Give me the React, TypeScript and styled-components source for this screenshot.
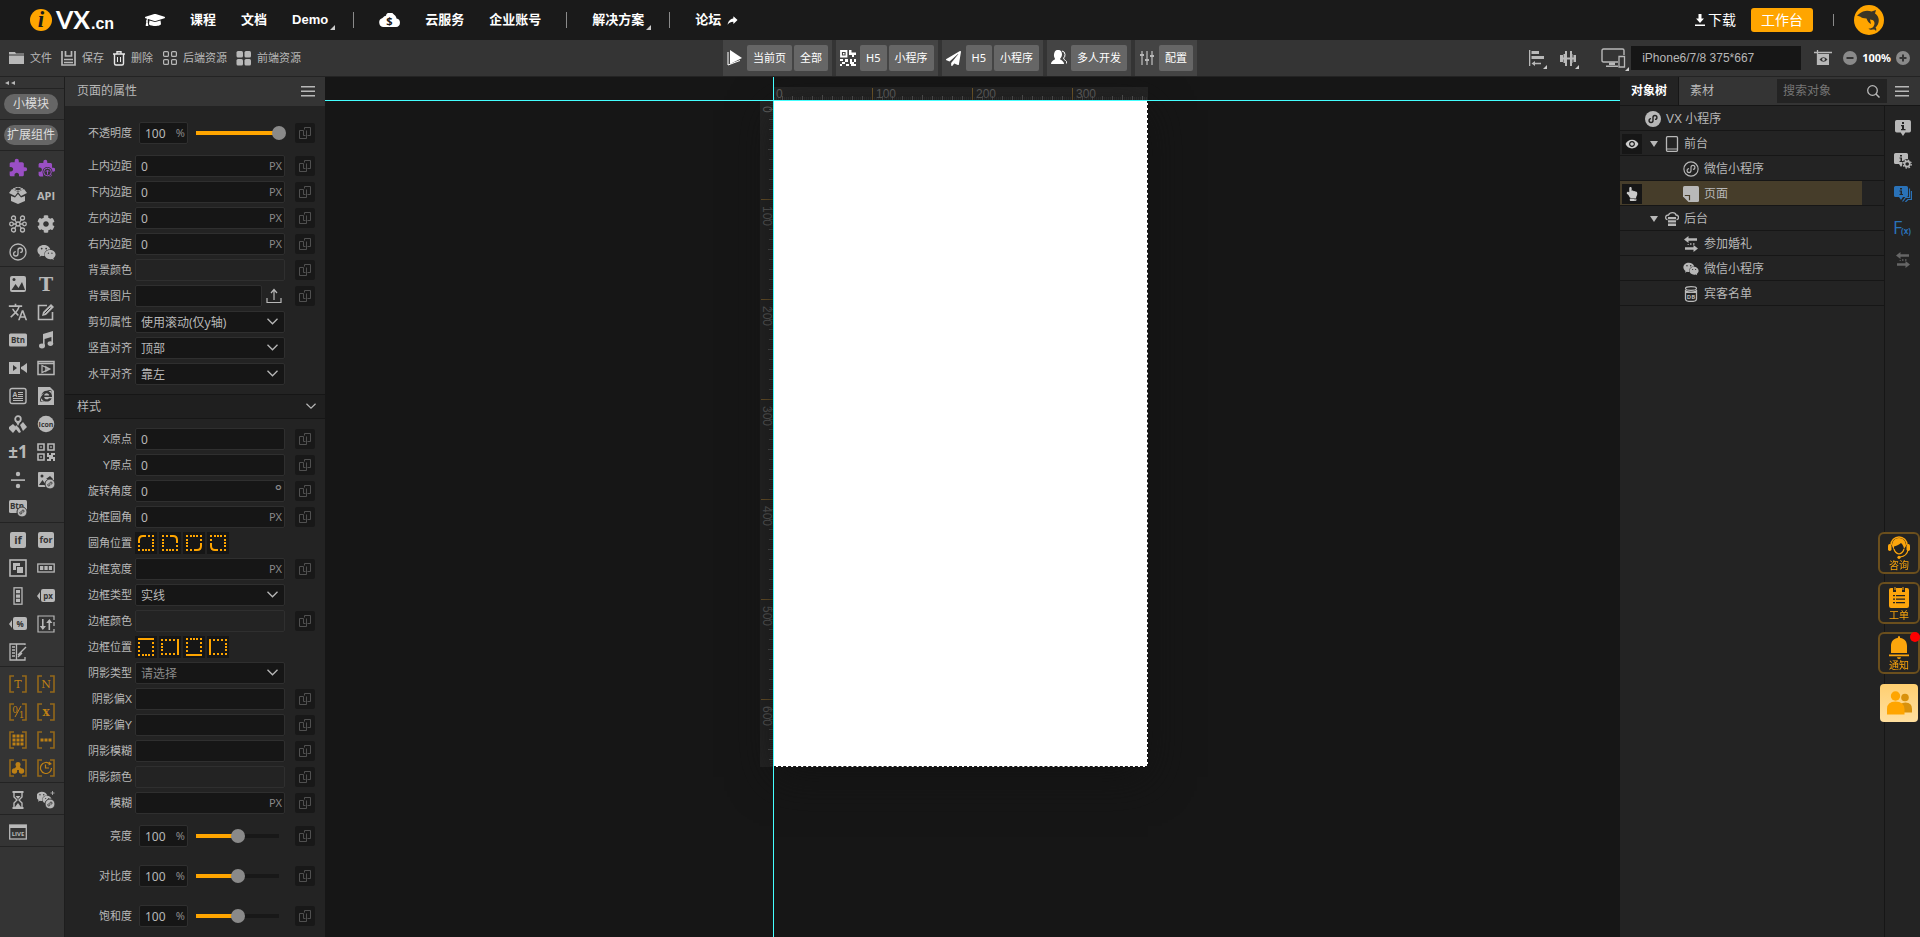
import React, { ReactNode, useId, useState } from 'react';
import styled, { createGlobalStyle } from 'styled-components';
import { FaCog, FaGraduationCap, FaHandPointUp, FaInternetExplorer, FaPaperPlane, FaWeixin } from 'react-icons/fa';
import { MdExtension, MdTranslate, MdVisibility } from 'react-icons/md';
import { IoIosShareAlt } from 'react-icons/io';

const sans = `'Liberation Sans', 'Noto Sans CJK SC', sans-serif`;
const ui = `'Noto Sans', 'Noto Sans CJK SC', sans-serif`;
const accent = '#ffa500';

const GlobalStyle = createGlobalStyle`
  *, *::before, *::after { box-sizing: border-box; }
  body { margin: 0; background: #161616; color: #b8b8b8; font: 12px/16px ${sans}; }
  button, input, select { font: inherit; color: inherit; border: 0; padding: 0; margin: 0; background: none; outline: none; }
  button { cursor: pointer; }
  a { color: inherit; text-decoration: none; }
  ul { list-style: none; margin: 0; padding: 0; }
  svg { display: block; flex: none; }
`;

/* ---------- icons ---------- */

const Svg = ({ w = 18, h, box, children }: { w?: number; h?: number; box?: string; children: ReactNode }) => (
  <svg width={w} height={h ?? w} viewBox={box ?? `0 0 ${w} ${h ?? w}`} fill="currentColor" aria-hidden="true">
    {children}
  </svg>
);

const Word = ({ x = 9, y, size, fill = 'currentColor', serif, weight = 700, children }: {
  x?: number; y: number; size: number; fill?: string; serif?: boolean; weight?: number; children: ReactNode;
}) => (
  <text x={x} y={y} fontSize={size} fontWeight={weight} fill={fill} textAnchor="middle"
    fontFamily={serif ? 'DejaVu Serif, serif' : 'Open Sans, sans-serif'}>{children}</text>
);

const stroke = { fill: 'none', stroke: 'currentColor' } as const;
const hook = 'M6.8 8.6a2.2 2.2 0 1 0 2.2 2.2V7.2a2.2 2.2 0 1 1 2.2 2.2';

const MiniLine = ({ w = 18 }: { w?: number }) => (
  <Svg w={w} box="0 0 18 18">
    <circle cx="9" cy="9" r="8" {...stroke} strokeWidth="1.3" />
    <path d={hook} {...stroke} strokeWidth="1.3" />
  </Svg>
);
const MiniSolid = () => (
  <Svg w={16} box="0 0 18 18">
    <circle cx="9" cy="9" r="9" />
    <path d={hook} fill="none" stroke="#232323" strokeWidth="1.6" />
  </Svg>
);
const LinkBadge = () => (
  <g>
    <circle cx="13" cy="13" r="5" stroke="#343434" />
    <path d="M11.7 12.8a1.1 1.1 0 1 0 1.2 1.2v-2a1.1 1.1 0 1 1 1.2 1.2" fill="none" stroke="#343434" strokeWidth="0.9" />
  </g>
);
const Brackets = ({ children }: { children: ReactNode }) => (
  <Svg>
    <path d="M5 1H1v16h4M13 1h4v16h-4" fill="none" stroke="#94681a" strokeWidth="1.6" />
    <g fill="#bd8015" color="#bd8015">{children}</g>
  </Svg>
);
const QrIcon = () => (
  <Svg>
    <path d="M1 1h6v6H1zM11 1h6v6h-6zM1 11h6v6H1z" {...stroke} strokeWidth="1.6" />
    <path d="M3.2 3.2h1.6v1.6H3.2zM13.2 3.2h1.6v1.6h-1.6zM3.2 13.2h1.6v1.6H3.2zM10 10h2v2h2v-2h4v2h-2v2h2v4h-2v-2h-2v2h-4v-2h2v-2h-2z" />
  </Svg>
);
const Swap = ({ w = 16 }: { w?: number }) => (
  <Svg w={w} box="0 0 16 16">
    <path d="M1 3.5 5.5 0v2.3H14v2.4H5.5V7zM15 12.5 10.5 9v2.3H2v2.4h8.5V16z" />
    <path d="M7 7h1.5v2H7zM10 7h1.5v2H10zM4.5 8H6v1H4.5z" opacity=".7" />
  </Svg>
);
const Menu = () => <Svg w={14} h={11}><path d="M0 0h14v1.5H0zM0 4.5h14V6H0zM0 9h14v1.5H0z" /></Svg>;
const Chevron = ({ w = 11 }: { w?: number }) => (
  <Svg w={w} h={w * 7 / 11} box="0 0 11 7"><path d="m.5.8 5 5 5-5" {...stroke} strokeWidth="1.3" /></Svg>
);
const CopyIcon = () => (
  <Svg w={12}>
    <path d="M4.5 3.5h-4v8h7v-8M4.5 3.5v5h2M8.5 8.5h3v-8h-6v2" {...stroke} />
  </Svg>
);
const TagIcon = ({ children }: { children: ReactNode }) => (
  <Svg>
    <rect x="4" y="2" width="14" height="13" rx="2" />
    <path d="M3 5v8L0 9z" />
    <Word x={11} y={12} size={8} fill="#343434">{children}</Word>
  </Svg>
);
const InfoBubble = ({ gear, stack }: { gear?: boolean; stack?: boolean }) => (
  <Svg w={gear || stack ? 18 : 16} h={16}>
    <path d="M1.5 0h11Q14 0 14 1.5v8q0 1.5-1.5 1.5H9l-2 3-2-3H1.5Q0 11 0 9.5v-8Q0 0 1.5 0z"
      transform={gear || stack ? undefined : 'scale(1.14 1.14)'} />
    <path d={gear || stack ? 'M6 2h2v1.5H6zM5.5 4.5H8V8h1v1H5.5V8h1V5.5h-1z' : 'M7 2h2v2H7zM6 5h3v4h1.5v1.2H6V9h1V6.2H6z'} fill="#232323" />
    {stack && <path d="M15.5 2.5v9h-4l-3 4M17.4 5v8.5h-3.5L11.400 16" {...stroke} strokeWidth="1.2" />}
    {gear && <g><circle cx="13.2" cy="11" r="5" fill="#232323" /><circle cx="13.2" cy="11" r="2.6" {...stroke} strokeWidth="1.6" /><circle cx="13.2" cy="11" r="4" {...stroke} strokeWidth="1.3" strokeDasharray="1.7 1.44" /></g>}
  </Svg>
);
const Fx = () => (
  <Svg w={22} h={20}>
    <text x="1" y="16" fontSize="18" fontFamily="Open Sans, sans-serif">F</text>
    <text x="9" y="16" fontSize="8" fontWeight="700" fontFamily="Open Sans, sans-serif">(x)</text>
  </Svg>
);

type Tool = { name: string; icon: ReactNode };
const T = (name: string, icon: ReactNode): Tool => ({ name, icon });

const toolSections: Tool[][] = [
  [
    T('小模块', <MdExtension size={20} color="#9a4fc4" />),
    T('上传模块', <Svg><g color="#9a4fc4"><MdExtension size={19} /></g><circle cx="10.5" cy="13" r="5" fill="#343434" /><circle cx="10.5" cy="13" r="3.8" fill="none" stroke="#9a4fc4" /><path d="M10.5 15.5v-4M8.800 12.800l1.700-1.800 1.700 1.800" fill="none" stroke="#9a4fc4" /></Svg>),
    T('容器', <Svg><path d="m0 6 3-4 6 3-3 4zM18 6l-3-4-6 3 3 4zM2 9l4 1.5L9 7l3 3.5L16 9v5l-7 3-7-3z" /><path d="m4 2 5-2 5 2-5 2z" {...stroke} /></Svg>),
    T('API', <Svg w={20} h={18}><Word x={10} y={13} size={11}>API</Word></Svg>),
    T('网络', <Svg><g {...stroke} strokeWidth="1.3"><circle cx="4.5" cy="3" r="2" /><circle cx="13.5" cy="3" r="2" /><circle cx="2.5" cy="9" r="1.8" /><circle cx="15.5" cy="9" r="1.8" /><circle cx="4.5" cy="15" r="2" /><circle cx="13.5" cy="15" r="2" /><circle cx="9" cy="9" r="2" /><path d="m7.5 7.5-2-3M10.5 7.5l2-3M4 9h3M11 9h3M7.5 10.5l-2 3M10.5 10.5l2 3" /></g></Svg>),
    T('设置', <FaCog size={18} />),
    T('小程序', <MiniLine />),
    T('微信', <FaWeixin size={19} />),
  ],
  [
    T('图片', <Svg><rect x="1" y="1" width="16" height="16" rx="2" /><path d="m2.5 15 4-6 3 4L13 7l3 8z" fill="#343434" /><circle cx="5" cy="4.5" r="1.5" fill="#343434" /></Svg>),
    T('文字', <Svg w={20} h={24}><Word x={10} y={19} size={19} serif>T</Word></Svg>),
    T('翻译', <MdTranslate size={20} />),
    T('编辑', <Svg><path d="M10 2.5H1.5v14h14V9" {...stroke} strokeWidth="1.6" /><path d="m5 13 1-4 8-8 3 3-8 8z" /><path d="m7.5 10.5 6-6" stroke="#343434" /></Svg>),
    T('按钮', <Svg><rect y="2.5" width="18" height="13" rx="1.5" /><Word y={12} size={8} fill="#343434">Btn</Word></Svg>),
    T('音乐', <Svg><path d="m6 3 10-3v13h-1.6V6L7.600 8v7H6z" /><ellipse cx="5" cy="15" rx="3" ry="2.4" /><ellipse cx="13.4" cy="12.6" rx="2.8" ry="2.3" /></Svg>),
    T('视频', <Svg><path d="M0 3h11v12H0zM12 8l2-1 4-3v10l-4-3-2-1z" /><path d="m4 6 4 3-4 3z" fill="#343434" /></Svg>),
    T('播放器', <Svg><path d="M1 2.5h16v13H1zM1 4.5h16" {...stroke} strokeWidth="1.5" /><path d="m5 6.5 7.5 3.5L5 13.5z" {...stroke} strokeWidth="1.2" /><path d="m8 6.5 6 3.5-6 3.5z" opacity=".7" /></Svg>),
    T('文章', <Svg><rect x="1" y="1.5" width="16" height="15" rx="2" {...stroke} strokeWidth="1.4" /><Word x={6} y={10} size={7}>A</Word><path d="M9 5.5h5M9 7.5h5M9 9.5h5M4 11.5h10M4 13.5h10" {...stroke} /></Svg>),
    T('网页', <Svg><path d="M1 0h12l4 4v14H1z" /><g color="#343434" transform="translate(3 3)"><FaInternetExplorer size={12} /></g></Svg>),
    T('地图', <Svg><circle cx="9" cy="4" r="2.8" {...stroke} strokeWidth="1.8" /><path d="M6.5 6 9 11l2.5-5zM0 12l4-3 4 4-4 5-4-4zM7 10l3 3 2 4-2 1-4-5zM11 10l3-3 4 5-4 4z" /></Svg>),
    T('图标', <Svg><circle cx="9" cy="9" r="8.3" /><Word y={12} size={7} fill="#343434">Icon</Word></Svg>),
    T('计数', <Svg w={26} h={26}><Word x={13} y={19} size={17}>±1</Word></Svg>),
    T('二维码', <QrIcon />),
    T('除法', <Svg><path d="M2 8.3h14v1.6H2z" /><circle cx="9" cy="3" r="2.2" /><circle cx="9" cy="15" r="2.2" /></Svg>),
    T('图片链接', <Svg><rect x="1" y="1" width="16" height="15" rx="1" /><circle cx="5" cy="5" r="1.5" fill="#343434" /><path d="m2 14 3.5-5L9 14zM9 8l4-3 3 3z" fill="#343434" /><LinkBadge /></Svg>),
    T('按钮链接', <Svg><rect y="1" width="18" height="13" rx="1.5" /><Word x={8} y={10} size={8} fill="#343434">Btn</Word><LinkBadge /></Svg>),
  ],
  [
    T('条件', <Svg><rect x="1" y="1" width="16" height="16" rx="2" /><Word y={13} size={11} fill="#343434">if</Word></Svg>),
    T('循环', <Svg><rect x="1" y="1" width="16" height="16" rx="2" /><Word y={12} size={9} fill="#343434">for</Word></Svg>),
    T('层', <Svg><rect x="1" y="1" width="16" height="16" {...stroke} strokeWidth="1.6" /><path d="M4 4h7v3H7v4H4z" /><path d="M8 8h6v6H8z" /></Svg>),
    T('横排', <Svg><rect x=".8" y="5" width="16.4" height="8" {...stroke} strokeWidth="1.3" /><path d="M3 7h3.3v4H3zM7.4 7h3.3v4H7.400zM11.800 7H15v4h-3.200z" /></Svg>),
    T('竖排', <Svg><rect x="5" y=".8" width="8" height="16.4" {...stroke} strokeWidth="1.3" /><path d="M7 3v3.300h4V3zM7 7.400v3.300h4V7.400zM7 11.800V15h4v-3.200z" /></Svg>),
    T('像素', <TagIcon>px</TagIcon>),
    T('百分比', <TagIcon>%</TagIcon>),
    T('排序', <Svg><path d="M17 5V1H1v16h16v-3M17 7v4" {...stroke} strokeWidth="1.2" /><path d="M5 4h1.600v7H9l-3.200 4-3-4H5zM11.500 15h1.600V8h2.300l-3-4-3.200 4h2.300z" /></Svg>),
    T('表单', <Svg><path d="M16 2V1H1v16h15v-3M7.5 1v16" {...stroke} strokeWidth="1.3" /><path d="M3 4h3M3 7h3M3 10h3M3 13h3M9 12l8-8M9 14l4-4" {...stroke} strokeWidth="1.4" /></Svg>),
  ],
  [
    T('文本变量', <Brackets><Word y={13} size={11} serif weight={400}>T</Word></Brackets>),
    T('数字变量', <Brackets><Word y={13} size={11} serif weight={400}>N</Word></Brackets>),
    T('布尔变量', <Brackets><Word x={6} y={10} size={9} serif weight={400}>0</Word><Word x={12.5} y={15} size={9} serif weight={400}>1</Word><path d="m6 14 6-11" stroke="#bd8015" /></Brackets>),
    T('通用变量', <Brackets><Word y={13} size={12} serif>x</Word></Brackets>),
    T('二维数组', <Brackets><path d="M3.5 3.5h11v11h-11z" /><path d="M7 3v12M11 3v12M3 7h12M3 11h12" stroke="#343434" /></Brackets>),
    T('一维数组', <Brackets><path d="M3.5 7.5h3v3h-3zM7.5 7.5h3v3h-3zM11.5 7.5h3v3h-3z" /></Brackets>),
    T('对象变量', <Brackets><circle cx="9" cy="5.5" r="2.5" /><circle cx="5.5" cy="12" r="2.7" /><circle cx="12.5" cy="12" r="2.7" /><path d="M8 6h2l3 5H5z" /></Brackets>),
    T('时间变量', <Brackets><path d="M13 5.2A5.5 5.5 0 1 0 14.5 9M8.5 5.5V9H12" fill="none" stroke="#bd8015" strokeWidth="1.2" /><path d="M12 2.5 15 5l-3.5 1.5z" /></Brackets>),
  ],
  [
    T('计时器', <Svg><path d="M3.5 1h11M3.5 17h11" {...stroke} strokeWidth="2" /><path d="M5 2v4l3 3-3 3v4M13 2v4l-3 3 3 3v4" {...stroke} strokeWidth="1.4" /><path d="M6.5 5h5L9 8zM6 16l3-4 3 4z" /></Svg>),
    T('微信小程序', <Svg><g transform="translate(-1 -1)"><FaWeixin size={16} /></g><LinkBadge /><path d="M15.5 0v4M13.5 2h4" {...stroke} strokeWidth=".8" /></Svg>),
  ],
  [
    T('直播', <Svg><rect x=".7" y="2" width="16.6" height="14" {...stroke} strokeWidth="1.3" /><path d="M1 2h16v3H1z" /><Word y={13} size={6}>LIVE</Word></Svg>),
  ],
];

/* ---------- shell ---------- */

const Shell = styled.div`display: flex; flex-direction: column; min-height: 100vh; background: #161616;`;

const Header = styled.header`
  display: flex; align-items: center; justify-content: space-between;
  height: 40px; padding: 0 36px 0 30px; background: #1a1a1a; color: #fff;
`;
const Nav = styled.nav`display: flex; align-items: center; gap: 25px; font: bold 13px/16px ${sans};`;
const NavLink = styled.a<{ $caret?: boolean }>`
  position: relative; display: flex; align-items: center; gap: 5px; white-space: nowrap;
  ${p => p.$caret && `&::after { content: ''; position: absolute; right: -7px; bottom: -2px; border-bottom: 5px solid #ccc; border-left: 5px solid transparent; }`}
`;
const LogoLink = styled.a`margin-right: 4px;`;
const Divider = styled.span<{ $h: number }>`width: 1px; height: ${p => p.$h}px; background: #8a8a8a;`;
const Account = styled.div`display: flex; align-items: center; gap: 20px; font-size: 14px;`;
const Download = styled.a`display: flex; align-items: center; gap: 3px; margin-right: -5px;`;
const Workbench = styled.button`height: 24px; padding: 0 10px; border-radius: 3px; background: ${accent};`;
const Avatar = styled.button`width: 30px; height: 30px; border-radius: 50%; background: ${accent}; color: #3a3426;`;

const Toolbar = styled.div`
  display: grid; grid-template-columns: 1fr auto 1fr; align-items: center;
  height: 37px; border-bottom: 1px solid #232323; background: #343434; font-size: 11px;
`;
const FileTools = styled.div`display: flex; gap: 9px; padding-left: 9px;`;
const FileButton = styled.button`display: flex; align-items: center; gap: 6px; white-space: nowrap;`;
const RunTools = styled.div`display: flex; gap: 4px; height: 36px; color: #fff;`;
const RunGroup = styled.div`display: flex; align-items: center; gap: 2px; padding: 0 4px; background: #444;`;
const RunIcon = styled.span`display: grid; place-items: center; width: 16px; margin-right: 2px;`;
const RunButton = styled.button`height: 26px; padding: 0 6px; border-radius: 2px; background: #666; white-space: nowrap; font-family: ${ui};`;
const ViewTools = styled.div`display: flex; align-items: center; justify-content: flex-end; gap: 5px; padding-right: 10px;`;
const ViewButton = styled.button<{ $space?: number; $caret?: boolean }>`
  position: relative; margin-right: ${p => p.$space ?? 0}px;
  ${p => p.$caret && `&::after { content: ''; position: absolute; right: -3px; bottom: -3px; border-bottom: 4px solid #ccc; border-left: 4px solid transparent; }`}
`;
const DeviceSelect = styled.select`
  appearance: none; width: 170px; height: 24px; margin-right: 8px; padding-left: 11px; background: #161616; font-size: 12px;
`;
const ZoomValue = styled.span`color: #fff; font: bold 11px/16px ${ui};`;

const Main = styled.main`display: flex; flex: 1;`;

/* ---------- tool strip ---------- */

const Strip = styled.aside`width: 65px; background: #343434; border-right: 1px solid #1e1e1e;`;
const Collapse = styled.button`display: flex; align-items: center; width: 100%; height: 12px; padding-left: 5px; border-bottom: 1px solid #232323;`;
const PillRow = styled.div`display: grid; place-items: center; height: 31px; padding-right: 2px; border-bottom: 1px solid #232323;`;
const Pill = styled.button`width: 54px; height: 20px; border-radius: 10px; background: #666; color: #ddd;`;
const ToolGrid = styled.div`
  display: grid; grid-template-columns: 28px 28px; grid-auto-rows: 28px;
  padding: 3px 4px 0; border-bottom: 1px solid #232323; color: #b8b8b8;
`;
const ToolButton = styled.button`display: grid; place-items: center;`;

/* ---------- property panel ---------- */

const Panel = styled.aside`width: 260px; background: #232323;`;
const PanelTitle = styled.div`
  display: flex; align-items: center; justify-content: space-between;
  height: 29px; padding: 0 10px 1px 12px; background: #343434;
`;
const SectionHead = styled.button`
  display: flex; align-items: center; justify-content: space-between; width: 100%;
  height: 25px; padding: 0 9px 0 12px; background: #1f1f1f; border: solid #161616; border-width: 1px 0;
`;
const Rows = styled.div`padding: 7px 0;  &:last-child { padding-bottom: 0; }`;
const Row = styled.div<{ $tall?: boolean }>`
  display: grid; grid-template-columns: 67px 150px 20px; column-gap: 3px; align-items: center;
  height: ${p => (p.$tall ? 40 : 26)}px; font-size: 11px;
  & > :nth-child(3) { margin-left: 7px; }
`;
const Label = styled.label`text-align: right; white-space: nowrap;`;
const Field = styled.div`position: relative; display: flex; align-items: center;`;
const fieldBox = `height: 22px; border: 1px solid #2f2f2f; border-radius: 2px; font: 12px/16px ${ui};`;
const TextInput = styled.input<{ $plain?: boolean }>`
  ${fieldBox} flex: 1; min-width: 0; padding: 0 5px; background: ${p => (p.$plain ? '#232323' : '#161616')};
`;
const Unit = styled.span<{ $raised?: boolean }>`
  position: absolute; right: 3px; top: 3px; color: #8a8a8a; font: ${p => (p.$raised ? 17 : 11)}px/16px ${ui}; pointer-events: none;
`;
const SelectBox = styled.select<{ $muted?: boolean }>`
  ${fieldBox} appearance: none; width: 100%; padding: 1px 5px 0; background: #161616; color: ${p => (p.$muted ? '#8a8a8a' : 'inherit')};
`;
const SelectArrow = styled.span`position: absolute; right: 7px; top: 7px; pointer-events: none;`;
const Copy = styled.button`
  display: grid; place-items: center; width: 20px; height: 20px; border-radius: 2px; background: #181818; color: #505050;
`;
const Upload = styled.button`margin: 0 3px 0 4px;`;
const PercentBox = styled.div`position: relative; display: flex; width: 49px; margin: 0 1px 0 4px; flex: none;`;
const Range = styled.input<{ $fill: number }>`
  appearance: none; flex: none; width: 97px; height: 16px; cursor: pointer;
  background: linear-gradient(to right, ${accent} ${p => p.$fill}%, #181818 ${p => p.$fill}%) center / calc(100% - 14px) 4px no-repeat;
  &::-webkit-slider-thumb { appearance: none; width: 14px; height: 14px; border-radius: 50%; background: #8a8a8a; }
`;
const Sides = styled.div`display: flex; gap: 2px;`;
const SideButton = styled.button`display: grid; place-items: center; width: 22px; height: 22px; background: #161616; color: ${accent};`;

const CopyButton = () => <Copy aria-label="绑定"><CopyIcon /></Copy>;

const TextRow = ({ label, value = '', unit, plain, upload }: {
  label: string; value?: string; unit?: string; plain?: boolean; upload?: boolean;
}) => {
  const id = useId();
  return (
    <Row>
      <Label htmlFor={id}>{label}</Label>
      <Field>
        <TextInput id={id} defaultValue={value} $plain={plain} />
        {unit && <Unit $raised={unit === '°'}>{unit}</Unit>}
        {upload && <Upload aria-label="上传图片"><Svg w={16}><path d="M1 10v4.5h14V10M8 12V2M5 5l3-3.5L11 5" {...stroke} strokeWidth="1.2" /></Svg></Upload>}
      </Field>
      <CopyButton />
    </Row>
  );
};

const SelectRow = ({ label, value, muted }: { label: string; value: string; muted?: boolean }) => {
  const id = useId();
  return (
    <Row>
      <Label htmlFor={id}>{label}</Label>
      <Field>
        <SelectBox id={id} $muted={muted}><option>{value}</option></SelectBox>
        <SelectArrow><Chevron /></SelectArrow>
      </Field>
    </Row>
  );
};

const SliderRow = ({ label, max }: { label: string; max: number }) => {
  const id = useId();
  const [value, setValue] = useState(100);
  return (
    <Row $tall>
      <Label htmlFor={id}>{label}</Label>
      <Field>
        <PercentBox>
          <TextInput id={id} value={value} onChange={e => setValue(Number(e.target.value) || 0)} />
          <Unit>%</Unit>
        </PercentBox>
        <Range type="range" aria-label={label} min={0} max={max} value={value} $fill={(value / max) * 100}
          onChange={e => setValue(Number(e.target.value))} />
      </Field>
      <CopyButton />
    </Row>
  );
};

const CornerIcon = ({ turn }: { turn: number }) => (
  <Svg w={16}>
    <g transform={`rotate(${turn} 8 8)`}>
      <path d="M10 0h2v2h-2zM14 0h2v2h-2zM14 4h2v2h-2zM14 7h2v2h-2zM14 10h2v2h-2zM14 14h2v2h-2zM10 14h2v2h-2zM7 14h2v2H7zM4 14h2v2H4zM0 14h2v2H0zM0 10h2v2H0z" />
      <path d="M1 8V5q0-4 4-4h3" fill="none" stroke="currentColor" strokeWidth="2" />
    </g>
  </Svg>
);
const EdgeIcon = ({ turn }: { turn: number }) => (
  <Svg w={18}>
    <g transform={`rotate(${turn} 9 9)`}>
      <path d="M1 4h2v2H1zM1 8h2v2H1zM1 12h2v2H1zM15 4h2v2h-2zM15 8h2v2h-2zM15 12h2v2h-2zM1 16h2v2H1zM5 16h2v2H5zM8 16h2v2H8zM11 16h2v2h-2zM15 16h2v2h-2z" />
      <path d="M1 1h16" stroke="currentColor" strokeWidth="2" />
    </g>
  </Svg>
);
const SideRow = ({ label, corner }: { label: string; corner?: boolean }) => (
  <Row>
    <Label as="span">{label}</Label>
    <Sides role="group" aria-label={label}>
      {[0, 90, 180, 270].map(turn => (
        <SideButton key={turn} aria-label={`${label} ${turn}`}>
          {corner ? <CornerIcon turn={turn} /> : <EdgeIcon turn={turn} />}
        </SideButton>
      ))}
    </Sides>
  </Row>
);

/* ---------- canvas ---------- */

const Canvas = styled.section`position: relative; flex: 1; display: flex; justify-content: center; padding-right: 37px; overflow: hidden;`;
const Stage = styled.div`position: relative; display: grid; grid-template: 13px 667px / 13px 375px; align-content: start; padding-top: 10px;`;
const Page = styled.div`background: #fff; border: 1px dashed #161616; box-shadow: 0 10px 40px #131313;`;
const GuideX = styled.i`position: absolute; left: 0; right: 0; top: 23px; height: 1px; background: #4ff;`;
const GuideY = styled.i`position: absolute; top: 0; bottom: 0; left: 13px; width: 1px; background: #4ff;`;

const Ruler = ({ length, vertical }: { length: number; vertical?: boolean }) => {
  const steps = Array.from({ length: Math.floor(length / 2) }, (_, i) => (i + 1) * 2);
  const marks = Array.from({ length: Math.ceil(length / 100) }, (_, i) => i * 100);
  return (
    <svg width={vertical ? 13 : length} height={vertical ? length : 13} aria-hidden="true">
      <g transform={vertical ? 'matrix(0 1 1 0 0 0)' : undefined}>
        <rect width={length} height="13" fill="#252525" />
        {steps.filter(n => n % 100).map(n => (
          <rect key={n} x={n - 1} y={n % 50 === 0 ? 8 : n % 10 === 0 ? 9 : 10} width="1" height="5" fill={n % 10 === 0 ? '#5a5a5a' : '#333'} />
        ))}
        {marks.slice(1).map(n => <rect key={n} x={n - 1} y="1" width="1" height="12" fill="#7a5d2a" />)}
      </g>
      {marks.map(n => (
        <text key={n} x={vertical ? n + 6 : n + 3} y={vertical ? -3 : 11} transform={vertical ? 'rotate(90)' : undefined}
          fontSize="12" fontFamily="Liberation Sans, sans-serif" fill="#666">{n}</text>
      ))}
    </svg>
  );
};

/* ---------- object tree ---------- */

const TreePanel = styled.aside`width: 300px; display: flex; flex-direction: column; background: #232323;`;
const Tabs = styled.div`display: flex; align-items: center; height: 29px; padding-right: 11px; background: #343434; border-bottom: 1px solid #161616;`;
const Tab = styled.button<{ $active?: boolean }>`
  height: 28px; padding: 0 11px;
  ${p => p.$active && 'background: #232323; color: #fff; font-weight: bold; border-right: 1px solid #161616;'}
`;
const Search = styled.label`display: flex; align-items: center; width: 110px; height: 24px; margin: 0 8px 0 auto; padding: 0 7px 0 6px; background: #232323;`;
const SearchInput = styled.input`flex: 1; min-width: 0; &::placeholder { color: #757575; }`;
const TreeBody = styled.div`display: flex; flex: 1;`;
const Tree = styled.ul`flex: 1;`;
const TreeItem = styled.li`height: 25px; border-bottom: 1px solid #161616;`;
const TreeLine = styled.div<{ $selected?: boolean }>`
  display: flex; align-items: center; height: 24px; padding-top: 2px; ${p => p.$selected && 'margin-right: 22px; background: #463d2a;'}
`;
const TreeFlag = styled.span`display: grid; width: 22px; padding-left: 2px;`;
const FlagButton = styled.button`display: grid; place-items: center; width: 20px; height: 20px; background: #161616; color: #ccc;`;
const treeIndent = [3, 8, 41];
const TreeNode = styled.button<{ $level: number }>`display: flex; align-items: center; gap: 5px; padding-left: ${p => treeIndent[p.$level]}px;`;
const Expander = styled.span`margin-right: 2px; border: 4px solid transparent; border-top: 6px solid #b8b8b8; border-bottom: 0;`;
const Rail = styled.div`display: flex; flex-direction: column; align-items: center; gap: 16px; width: 36px; padding: 13px 0 0; border-left: 1px solid #161616;`;
const RailButton = styled.button<{ $color?: string }>`display: grid; place-items: center; height: 17px; color: ${p => p.$color ?? 'inherit'};`;

const treeRows: { text: string; level: number; icon: ReactNode; open?: boolean; selected?: boolean; flag?: [string, ReactNode] }[] = [
  { text: 'VX 小程序', level: 0, icon: <MiniSolid /> },
  { text: '前台', level: 1, open: true, flag: ['显示', <MdVisibility size={14} />], icon: <Svg w={14} h={16}><rect x="1.5" y=".7" width="11" height="14.6" rx="1" {...stroke} strokeWidth="1.3" /><path d="M2 12.5h10v1H2z" /></Svg> },
  { text: '微信小程序', level: 2, icon: <MiniLine w={16} /> },
  { text: '页面', level: 2, selected: true, flag: ['点击', <FaHandPointUp size={14} />], icon: <Svg w={16}><path d="M1.5 0h13Q16 0 16 1.5v13q0 1.5-1.5 1.500H5.500L0 10.500v-9Q0 0 1.500 0z" /><path d="M1.800 9.500h4.700v4.800" fill="none" stroke="#463d2a" strokeWidth="1.2" /></Svg> },
  { text: '后台', level: 1, open: true, icon: <Svg w={14}><path d="M2.5 7.5Q.5 7.5.7 5q.3-2 2.800-2Q4.500.7 7.500.7T11 3q2.500 0 2.500 2.300T11.500 7.500" {...stroke} strokeWidth="1.3" /><path d="M3 5h8v2.300H3zM3 8.300h8v2.300H3zM3 11.600h8V14H3z" /></Svg> },
  { text: '参加婚礼', level: 2, icon: <Swap /> },
  { text: '微信小程序', level: 2, icon: <FaWeixin size={16} /> },
  { text: '宾客名单', level: 2, icon: <Svg w={16}><ellipse cx="8" cy="2.500" rx="5.500" ry="1.800" {...stroke} strokeWidth="1.2" /><path d="M2.500 4v9q0 2.500 5.500 2.500t5.500-2.500V4" {...stroke} strokeWidth="1.3" /><path d="M3 4.500q5 2 10 0V7H3z" /><Word x={8} y={13} size={6}>DB</Word></Svg> },
];

/* ---------- floating help ---------- */

const Floats = styled.div`position: fixed; right: 0; top: 532px; display: grid; gap: 8px; justify-items: center;`;
const FloatButton = styled.button`
  position: relative; display: flex; flex-direction: column; align-items: center; justify-content: space-between;
  width: 42px; height: 42px; padding: 2px 0 0; border: 2px solid #6b4f1d; border-radius: 6px; background: #232323; color: #fca50c; font-size: 10px; line-height: 14px;
`;
const Dot = styled.i`position: absolute; top: -2px; right: -2px; width: 10px; height: 10px; border-radius: 50%; background: #f00;`;
const TeamButton = styled.button`display: grid; place-items: center; width: 38px; height: 38px; margin-top: 2px; border-radius: 4px; background: linear-gradient(#ffcf70, #ffdf9f);`;

const Logo = () => (
  <svg width="86" height="36" viewBox="0 0 86 36" aria-hidden="true">
    <circle cx="11" cy="18" r="11" fill={accent} />
    <text x="11" y="25" textAnchor="middle" fontSize="23" fontWeight="700" fontStyle="italic" fontFamily="Liberation Serif, serif" fill="#1a1a1a">i</text>
    <text x="26" y="27" fontSize="25" fontFamily="Lato, sans-serif" fill="#fff">VX</text>
    <text x="61" y="27" fontSize="16" fontFamily="Liberation Sans, sans-serif" fill="#fff">.cn</text>
  </svg>
);

const SmallGrid = ({ solid }: { solid?: boolean }) => (
  <Svg w={15}>
    {[[1, 0], [9, 0], [1, 8], [9, 8]].map(([x, y]) => solid
      ? <rect key={`${x}${y}`} x={x - 0.5} y={y} width="6.5" height="6.5" rx="1.5" />
      : <rect key={`${x}${y}`} x={x + 0.6} y={y + 0.6} width="4.8" height="4.8" rx="1" {...stroke} strokeWidth="1.2" />)}
  </Svg>
);

const files: [string, ReactNode][] = [
  ['文件', <Svg w={15} h={14}><path d="M0 1h6l1 1.500h8v1H0zM0 4.500h15V13H0z" /></Svg>],
  ['保存', <Svg w={15}><path d="M1 0v14h13V0M4.500 0v5h6V0M3 8.500h9M3 11.500h9" {...stroke} strokeWidth="1.7" /></Svg>],
  ['删除', <Svg w={12} h={15}><g color="#e8e8e8"><path d="M0 3h12M4 2.500V.7h4v1.800M1.500 3v9.500q0 1.500 1.500 1.500h6q1.500 0 1.500-1.500V3" {...stroke} strokeWidth="1.4" /><path d="M4.500 6v5M7.500 6v5" {...stroke} /></g></Svg>],
  ['后端资源', <SmallGrid />],
  ['前端资源', <SmallGrid solid />],
];

const runs: [ReactNode, string[]][] = [
  [<Svg w={16}><path d="M3 0 15 8 3 14z" /><path d="M1 2v13l12-4.500" {...stroke} /></Svg>, ['当前页', '全部']],
  [<Svg w={16}><path d="M1 1h5.500v5.500H1z" {...stroke} strokeWidth="1.8" /><path d="M3 3h1.500v1.500H3zM9 0h2.500v2.500H16V5h-2v2h-2V5H9zM0 9h3v2H0zM5 9h3v3H5v2H2v-2h3zM0 14h2v2H0zM6 14h3v2H6zM10 9h2v3h2V9h2v3h-2v2h2v2h-5v-2h-1z" /></Svg>, ['H5', '小程序']],
  [<FaPaperPlane size={15} />, ['H5', '小程序']],
  [<Svg w={16}><path d="M7 0c3 0 4 2 4 4.500S9.500 8 9 9c0 1 4 1.500 4 5H0c0-3.500 4-4 4-5S2.500 7 3 4.500 4 0 7 0z" /><path d="M11 1q3 .5 3 3.500T12.500 8q.5 2 2 2.500t1.200 3" {...stroke} /></Svg>, ['多人开发']],
  [<Svg w={14}><g color="#b8b8b8"><path d="M2 0v14M7 0v14M12 0v14" {...stroke} strokeWidth="1.3" /><path d="M0 3h4v2H0zM5 8h4v2H5zM10 4h4v2h-4z" /></g></Svg>, ['配置']],
];

export default function App() {
  return (
    <Shell>
      <GlobalStyle />
      <Header>
        <Nav>
          <LogoLink href="#" aria-label="iVX.cn"><Logo /></LogoLink>
          <FaGraduationCap size={20} />
          <NavLink href="#">课程</NavLink>
          <NavLink href="#">文档</NavLink>
          <NavLink href="#" $caret>Demo</NavLink>
          <Divider $h={16} />
          <Svg w={21} h={14}><path d="M5 14a4.600 4.600 0 0 1-1.500-9A5 5 0 0 1 8 2.500a5.500 5.500 0 0 1 9.500 3A4.300 4.300 0 0 1 17 14z" /><path d="M7 4a4 4 0 0 1 8-1z" /><Word x={10.5} y={12} size={11} fill="#1a1a1a">$</Word></Svg>
          <NavLink href="#">云服务</NavLink>
          <NavLink href="#">企业账号</NavLink>
          <Divider $h={16} />
          <NavLink href="#" $caret>解决方案</NavLink>
          <Divider $h={16} />
          <NavLink href="#">论坛<IoIosShareAlt size={13} /></NavLink>
        </Nav>
        <Account>
          <Download href="#"><Svg w={10} h={12}><path d="M3.500 0h3v4.500H9L5 9 1 4.500h2.500zM0 10.500h10V12H0z" /></Svg>下载</Download>
          <Workbench>工作台</Workbench>
          <Divider $h={12} />
          <Avatar aria-label="账户">
            <Svg w={30}><path d="M3 10.500C5 9.500 6 7.500 9 6.500c3-1 6-.8 8.500 0L22 5l-1 3.500c3 2 4.500 5.500 3.500 9-.5 2.500-2 4-3 5 1 1 1 2.500.5 3.500-1-1.500-2-1.700-3.500-1.500-1.500.5-3 .3-4-1 2.500 0 4-.5 5-2 1.500-2.500 1.500-5-1-6.500l-2.500-.5 1 4.500c-2.500-1-3.500-3-4.500-5.500-3 0-5-.5-6-1.700z" /></Svg>
          </Avatar>
        </Account>
      </Header>

      <Toolbar>
        <FileTools>
          {files.map(([name, icon]) => <FileButton key={name}>{icon}{name}</FileButton>)}
        </FileTools>
        <RunTools>
          {runs.map(([icon, names], i) => (
            <RunGroup key={i}>
              <RunIcon>{icon}</RunIcon>
              {names.map(name => <RunButton key={name}>{name}</RunButton>)}
            </RunGroup>
          ))}
        </RunTools>
        <ViewTools>
          <ViewButton aria-label="对齐" $caret $space={11}><Svg w={15} h={16}><path d="M0 0h1.300v16H0zM2.500 1H10v3H2.500zM2.500 6H15v3H2.500zM6 11l-3.500 2.500L6 16v-1.700h6v-1.600H6z" /></Svg></ViewButton>
          <ViewButton aria-label="分布" $caret $space={20}><Svg w={16}><path d="M0 5h3v7H0zM5 1h2v15H5zM10 1h2v15h-2zM3.500 4H7v9H3.500zM10 4h2.500v9H10zM7 7.500h3v2H7zM13.500 5H16v7h-2.500zM3 7.500h10.500v2H3z" /></Svg></ViewButton>
          <ViewButton aria-label="设备" $caret><Svg w={25} h={20}><path d="M17 14H2.500Q1 14 1 12.500v-10Q1 1 2.500 1h19Q23 1 23 2.500V7" {...stroke} strokeWidth="1.4" /><path d="M5 17.500h12V19H5zM8 14.500h6V17H8z" /><path d="M18 8.500h5.500V19H18z" {...stroke} strokeWidth="1.3" /></Svg></ViewButton>
          <DeviceSelect aria-label="设备尺寸"><option>iPhone6/7/8 375*667</option></DeviceSelect>
          <ViewButton aria-label="预览区域" $space={6}><Svg w={18} h={16}><path d="M0 2.500h18M3.500 0v15" {...stroke} strokeWidth="1.3" /><path d="M4 4h11v11H4z" /><path d="M5.500 9.500Q9.500 5 13.500 9.500q-4 4.500-8 0z" fill="#343434" /><circle cx="9.500" cy="9.500" r="1.4" /></Svg></ViewButton>
          <ViewButton aria-label="缩小"><Svg w={14}><circle cx="7" cy="7" r="7" fill="#8a8a8a" /><path d="M3.500 6h7v2h-7z" fill="#343434" /></Svg></ViewButton>
          <ZoomValue>100%</ZoomValue>
          <ViewButton aria-label="放大"><Svg w={14}><circle cx="7" cy="7" r="7" fill="#8a8a8a" /><path d="M3.500 6h7v2h-7zM6 3.500h2v7H6z" fill="#343434" /></Svg></ViewButton>
        </ViewTools>
      </Toolbar>

      <Main>
        <Strip>
          <Collapse aria-label="收起"><Svg w={11} h={6}><path d="M4 1v4L0 3zM10 1v4L6 3z" /></Svg></Collapse>
          <PillRow><Pill>小模块</Pill></PillRow>
          <PillRow><Pill>扩展组件</Pill></PillRow>
          {toolSections.map((tools, i) => (
            <ToolGrid key={i}>
              {tools.map(t => <ToolButton key={t.name} aria-label={t.name}>{t.icon}</ToolButton>)}
            </ToolGrid>
          ))}
        </Strip>

        <Panel>
          <PanelTitle>页面的属性<Menu /></PanelTitle>
          <Rows>
            <SliderRow label="不透明度" max={100} />
            <TextRow label="上内边距" value="0" unit="PX" />
            <TextRow label="下内边距" value="0" unit="PX" />
            <TextRow label="左内边距" value="0" unit="PX" />
            <TextRow label="右内边距" value="0" unit="PX" />
            <TextRow label="背景颜色" plain />
            <TextRow label="背景图片" upload />
            <SelectRow label="剪切属性" value="使用滚动(仅y轴)" />
            <SelectRow label="竖直对齐" value="顶部" />
            <SelectRow label="水平对齐" value="靠左" />
          </Rows>
          <SectionHead>样式<Chevron w={10} /></SectionHead>
          <Rows>
            <TextRow label="X原点" value="0" />
            <TextRow label="Y原点" value="0" />
            <TextRow label="旋转角度" value="0" unit="°" />
            <TextRow label="边框圆角" value="0" unit="PX" />
            <SideRow label="圆角位置" corner />
            <TextRow label="边框宽度" unit="PX" />
            <SelectRow label="边框类型" value="实线" />
            <TextRow label="边框颜色" plain />
            <SideRow label="边框位置" />
            <SelectRow label="阴影类型" value="请选择" muted />
            <TextRow label="阴影偏X" />
            <TextRow label="阴影偏Y" />
            <TextRow label="阴影模糊" />
            <TextRow label="阴影颜色" plain />
            <TextRow label="模糊" unit="PX" />
            <SliderRow label="亮度" max={200} />
            <SliderRow label="对比度" max={200} />
            <SliderRow label="饱和度" max={200} />
          </Rows>
        </Panel>

        <Canvas>
          <Stage>
            <span />
            <Ruler length={375} />
            <Ruler length={667} vertical />
            <Page />
            <GuideY />
          </Stage>
          <GuideX />
        </Canvas>

        <TreePanel>
          <Tabs>
            <Tab $active>对象树</Tab>
            <Tab>素材</Tab>
            <Search>
              <SearchInput placeholder="搜索对象" aria-label="搜索对象" />
              <Svg w={13}><circle cx="5.500" cy="5.500" r="4.800" {...stroke} strokeWidth="1.3" /><path d="m9 9 3.500 3.500" {...stroke} strokeWidth="1.5" /></Svg>
            </Search>
            <Menu />
          </Tabs>
          <TreeBody>
            <Tree>
              {treeRows.map((r, i) => (
                <TreeItem key={i}>
                  <TreeLine $selected={r.selected}>
                    <TreeFlag>{r.flag && <FlagButton aria-label={r.flag[0]}>{r.flag[1]}</FlagButton>}</TreeFlag>
                    <TreeNode $level={r.level}>{r.open && <Expander />}{r.icon}{r.text}</TreeNode>
                  </TreeLine>
                </TreeItem>
              ))}
            </Tree>
            <Rail>
              <RailButton aria-label="信息"><InfoBubble /></RailButton>
              <RailButton aria-label="信息设置"><InfoBubble gear /></RailButton>
              <RailButton aria-label="信息列表" $color="#2a72b8"><InfoBubble stack /></RailButton>
              <RailButton aria-label="函数" $color="#2a72b8"><Fx /></RailButton>
              <RailButton aria-label="交换" $color="#666"><Swap /></RailButton>
            </Rail>
          </TreeBody>
        </TreePanel>
      </Main>

      <Floats>
        <FloatButton>
          <Svg w={22} h={23}><path d="M3 9a8 8 0 0 1 16 0" {...stroke} strokeWidth="1.5" /><path d="M4 10c0-5 3-8 7-8s7 3 7 8l-2 3c-.5-3-1-4-3-6-2 2-5 3-7 3.500L6 14z" /><rect y="8" width="3.500" height="7" rx="1.700" /><rect x="18.500" y="8" width="3.500" height="7" rx="1.700" /><path d="M20 14q-1 6-8 7M6 13q1 4 5 5 4-1 5-5" {...stroke} strokeWidth="1.2" /><circle cx="11" cy="21.300" r="1.600" /></Svg>
          咨询
        </FloatButton>
        <FloatButton>
          <Svg w={22} h={23}><path d="M3 2h2v4h3V2h6v4h3V2h2q2 0 2 2v16q0 2-2 2H3q-2 0-2-2V4q0-2 2-2z" /><path d="M6.500 1h1v3h-1zM14.500 1h1v3h-1z" /><path d="M5 9h2v1.300H5zM8 9h9v1.300H8zM5 12.500h2v1.300H5zM8 12.500h9v1.300H8zM5 16h2v1.300H5zM8 16h9v1.300H8z" fill="#232323" /></Svg>
          工单
        </FloatButton>
        <FloatButton>
          <Svg w={22} h={23}><path d="M9.800 2q0-2 1.200-2t1.200 2C17 2.500 19 6 19 10v7H3v-7c0-4 2-7.500 6.800-8zM1 18.500h20v1.800H1zM9 21.300h4q0 1.700-2 1.700t-2-1.700z" /></Svg>
          通知
          <Dot />
        </FloatButton>
        <TeamButton aria-label="团队">
          <Svg w={27} h={24}><g fill="#d9920c"><circle cx="19" cy="6.500" r="3.800" /><path d="M13 21.500v-4q0-6 6.500-6t6.500 6.500v3.500z" /></g><g fill={accent}><circle cx="9.500" cy="5" r="4.700" /><path d="M1 23.500V18q0-7.500 8.500-7.500T18.500 18v5.500z" /></g></Svg>
        </TeamButton>
      </Floats>
    </Shell>
  );
}
